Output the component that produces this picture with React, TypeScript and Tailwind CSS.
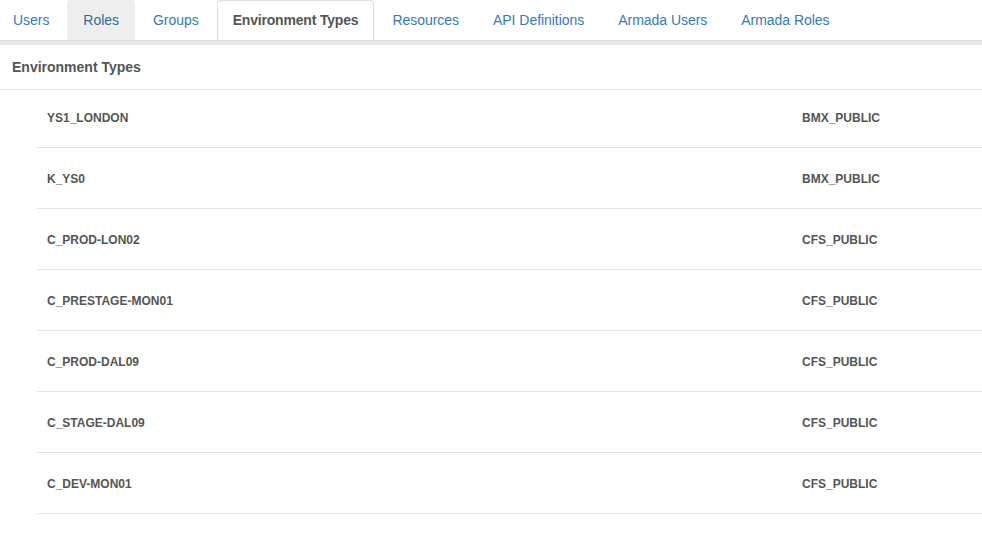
import React from "react";

const tabs = [
  "Users",
  "Roles",
  "Groups",
  "Environment Types",
  "Resources",
  "API Definitions",
  "Armada Users",
  "Armada Roles",
];

const envTypes = [
  { name: "YS1_LONDON", kind: "BMX_PUBLIC" },
  { name: "K_YS0", kind: "BMX_PUBLIC" },
  { name: "C_PROD-LON02", kind: "CFS_PUBLIC" },
  { name: "C_PRESTAGE-MON01", kind: "CFS_PUBLIC" },
  { name: "C_PROD-DAL09", kind: "CFS_PUBLIC" },
  { name: "C_STAGE-DAL09", kind: "CFS_PUBLIC" },
  { name: "C_DEV-MON01", kind: "CFS_PUBLIC" },
];

export default function App() {
  return (
    <div className="w-[982px] h-[536px] bg-white overflow-hidden font-['Liberation_Sans',Arial,sans-serif]">
      {/* Tabs */}
      <div className="flex h-[40px] gap-[2px] -ml-[3px]">
        {tabs.map((t) => {
          const active = t === "Environment Types";
          const hover = t === "Roles";
          return (
            <div
              key={t}
              className={
                active
                  ? "flex items-center px-[15px] text-[14px] font-bold tracking-[-0.18px] text-[#555] bg-white border border-b-0 border-[#ddd] rounded-t-[4px]"
                  : hover
                  ? "flex items-center px-4 text-[14px] tracking-[-0.04px] text-[#2f6a9e] bg-[#eee] rounded-t-[4px]"
                  : "flex items-center px-4 text-[14px] tracking-[-0.04px] text-[#337ab7]"
              }
            >
              {t}
            </div>
          );
        })}
      </div>
      <div className="h-[5px] border-t border-[#d9dcdf] bg-[#e7eaed]" />

      {/* Header */}
      <div className="h-[45px] flex items-center px-3 border-b border-[#e5e5e5]">
        <span className="text-[14px] font-bold text-[#555]">Environment Types</span>
      </div>

      {/* Rows */}
      <div className="ml-[37px]">
        {envTypes.map((e, i) => (
          <div
            key={e.name}
            className={
              (i === 0 ? "h-[58px] pb-[2px] " : "h-[61px] pt-[1px] ") +
              "flex items-center pl-[10px] border-b border-[#e5e5e5] text-[12px] font-bold text-[#555]"
            }
          >
            <span className="w-[755px]">{e.name}</span>
            <span>{e.kind}</span>
          </div>
        ))}
      </div>
    </div>
  );
}
